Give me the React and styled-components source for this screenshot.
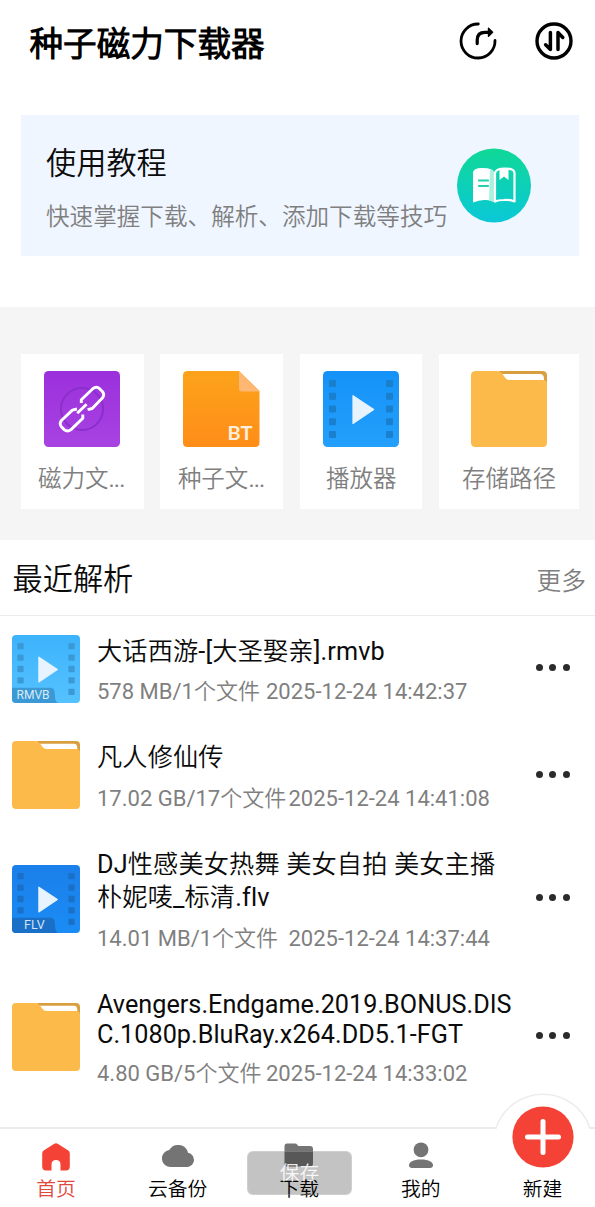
import React from 'react';
import styled, { createGlobalStyle } from 'styled-components';

const colors = {
  text: '#0b0b0b',
  muted: '#7f7f7f',
  line: '#ececec',
  red: '#f44336',
  nav: '#747474',
};

const GlobalStyle = createGlobalStyle`
  * { box-sizing: border-box; }
  body {
    margin: 0;
    background: #fff;
    color: ${colors.text};
    font-family: Roboto, 'Noto Sans CJK SC DemiLight', 'Noto Sans CJK SC', sans-serif;
    overflow: hidden;
  }
  svg { display: block; flex: none; }
`;

const Page = styled.div`
  display: flex;
  flex-direction: column;
  width: 595px;
  height: 1207px;
  overflow: hidden;
`;

const Header = styled.header`
  display: flex;
  align-items: center;
  height: 84px;
  padding: 0 22px 0 29.5px;
`;

const AppTitle = styled.h1`
  flex: 1;
  margin: 6px 0 0;
  font-size: 33.6px;
  line-height: 40px;
  font-weight: 700;
  color: #000;
`;

const HeaderActions = styled.div`
  display: flex;
  gap: 38px;
  margin-bottom: 2px;
`;

const Banner = styled.section`
  display: flex;
  justify-content: space-between;
  height: 141px;
  margin: 31px 16px 51px 20.5px;
  padding: 29px 48px 0 25.5px;
  background: #eff6ff;
`;

const BannerTitle = styled.h2`
  margin: 0;
  font-size: 30.2px;
  line-height: 40px;
  font-weight: 400;
`;

const BannerText = styled.p`
  margin: 17px 0 0;
  font-size: 23.6px;
  line-height: 32px;
  color: ${colors.muted};
  white-space: nowrap;
`;

const BannerIcon = styled.div`
  margin-top: 4px;
`;

const Shortcuts = styled.section`
  display: grid;
  grid-template-columns: 123px 123px 122px 140px;
  justify-content: space-between;
  height: 233px;
  padding: 47px 16px 31px 20.5px;
  background: #f5f5f5;
`;

const Shortcut = styled.div`
  display: flex;
  flex-direction: column;
  align-items: center;
  padding-top: 17px;
  background: #fff;
`;

const ShortcutLabel = styled.span`
  margin-top: 16px;
  font-size: 23.5px;
  line-height: 32px;
  color: ${colors.muted};
  white-space: nowrap;
`;

const Ellipsis = styled.span`
  margin-right: 1.5px;
  letter-spacing: -0.9px;
`;

const SectionHead = styled.div`
  display: flex;
  justify-content: space-between;
  align-items: center;
  height: 75.5px;
  padding: 6px 9px 0 12.5px;
  border-bottom: 1px solid ${colors.line};
`;

const SectionTitle = styled.h2`
  margin: 0;
  font-size: 30.2px;
  line-height: 40px;
  font-weight: 400;
`;

const More = styled.span`
  padding-top: 3px;
  font-size: 24.8px;
  line-height: 32px;
  color: ${colors.muted};
`;

const FileList = styled.div`
  flex: 1;
`;

const FileRow = styled.div`
  display: flex;
  align-items: center;
  padding: 0 25px 0 12px;
`;

const FileInfo = styled.div`
  width: 418px;
  margin-left: 17px;
  padding: ${(p) => (p.$dense ? '21px 0 17px' : '19px 0 16px')};
`;

const FileName = styled.div`
  font-size: 25.2px;
  line-height: ${(p) => (p.$dense ? '30px' : '33.5px')};
  letter-spacing: ${(p) => (p.$dense ? '0.03px' : '0.15px')};
  word-break: break-all;
`;

const FileMeta = styled.div`
  display: flex;
  margin-top: 10px;
  font-size: 22px;
  line-height: 28px;
  color: ${colors.muted};
  white-space: nowrap;
`;

const FileSize = styled.span`
  width: ${(p) => p.$width}px;
`;

const Dots = styled.div`
  display: flex;
  gap: 6.4px;
  margin-left: auto;
  margin-bottom: 2px;

  i {
    width: 7.2px;
    height: 7.2px;
    border-radius: 50%;
    background: #2b2b2b;
  }
`;

const TabBar = styled.nav`
  position: relative;
  display: flex;
  justify-content: space-between;
  height: 80px;
  padding: 0 12.5px 0 16px;
  border-top: 2px solid ${colors.line};
`;

const Tab = styled.div`
  position: relative;
  display: flex;
  flex-direction: column;
  align-items: center;
  justify-content: flex-end;
  width: 80px;
  padding-bottom: 4px;
`;

const TabLabel = styled.span`
  font-size: 19.8px;
  line-height: 26px;
  margin-top: 4px;
  color: ${(p) => (p.$active ? '#e0483e' : '#000')};
`;

const AddButton = styled.div`
  position: absolute;
  left: 50%;
  top: -37px;
  margin-left: -50px;
`;

const Toast = styled.div`
  position: absolute;
  left: 247px;
  top: 22px;
  width: 105px;
  height: 44px;
  border: 1px solid rgba(255, 255, 255, 0.2);
  border-radius: 6px;
  background: rgba(0, 0, 0, 0.235);
  color: rgba(255, 255, 255, 0.88);
  font-size: 19.8px;
  line-height: 43px;
  text-align: center;
`;

const ShareIcon = () => (
  <svg width="38" height="38" viewBox="0 0 38 38" fill="none" stroke="#000" strokeLinecap="round" strokeLinejoin="round">
    <path d="M19.300 2A17 17 0 1 0 36 18.400" strokeWidth="2.800" />
    <path d="M18.200 21.600V18Q18.200 10.300 26 10.300H31" strokeWidth="3.200" />
    <path d="M29.500 6.300 33.600 10.300 29.500 14.200Z" fill="#000" strokeWidth="1.400" />
  </svg>
);

const SortIcon = () => (
  <svg width="38" height="38" viewBox="0 0 38 38" fill="none" stroke="#000" strokeLinecap="round" strokeLinejoin="round">
    <circle cx="19" cy="19" r="17" strokeWidth="3.400" />
    <path d="M15.400 10.600V27.400L10.600 22.800" strokeWidth="3.500" />
    <path d="M23 27.600V10.600L27.800 15.400" strokeWidth="3.500" />
  </svg>
);

const GuideIcon = () => (
  <svg width="74" height="75" viewBox="0 0 74 75">
    <defs>
      <linearGradient id="guide" x1="0" y1="0" x2="0" y2="1">
        <stop offset="0" stopColor="#10d896" />
        <stop offset="1" stopColor="#0ac8d8" />
      </linearGradient>
    </defs>
    <circle cx="37" cy="37.5" r="37" fill="url(#guide)" />
    <path d="M16 25Q16 20 25 20Q37 20 37 25V54Q33 51.500 27 52Q22 52 16 54.500Z" fill="#fff" />
    <path d="M33 21Q37 22 37 25V54L32 52.400Z" fill="#a9f1e0" />
    <path d="M38 25Q39 20.500 48 20.500Q57.500 20.500 57.500 25V53.500Q53 51.500 47 52Q41 52 38 53.500Z" fill="none" stroke="#fff" strokeWidth="2.200" strokeLinejoin="round" />
    <path d="M42.500 20H51.500V32L47 28.600L42.500 32Z" fill="#fff" />
    <path d="M22 32.500H31M22 38H31" stroke="#20d0ae" strokeWidth="2.200" strokeLinecap="round" />
  </svg>
);

const MagnetIcon = () => (
  <svg width="76" height="76" viewBox="0 0 76 76">
    <defs>
      <linearGradient id="magnet" x1="0" y1="0" x2="0" y2="1">
        <stop offset="0" stopColor="#9b30dc" />
        <stop offset="1" stopColor="#a843e2" />
      </linearGradient>
    </defs>
    <rect width="76" height="76" rx="4.500" fill="url(#magnet)" />
    <circle cx="38" cy="38" r="21" fill="none" stroke="#8a2fca" strokeWidth="2" />
    <g fill="none" stroke="#fff" strokeWidth="2.900" strokeLinejoin="round">
      <path d="M37.300 32V28.800L48.800 17.700Q52.500 15 55.600 17.700L58.600 20.700Q60.800 23.800 58.600 26.800L48.200 37.500L43.600 38.600" />
      <path d="M33 38 28.400 39.100 17.400 49.500Q15 52.500 17.400 55.800L20.200 58.600Q23.400 61.200 27 58.600L38.800 47.200V43.500" />
      <path d="M33.200 42.200 42.600 33.200" />
    </g>
  </svg>
);

const TorrentLabel = styled.text`
  font-family: Lato, sans-serif;
  font-size: 18.5px;
  font-weight: 700;
  fill: #ffeedb;
`;

const TorrentIcon = () => (
  <svg width="77" height="76" viewBox="0 0 77 76">
    <defs>
      <linearGradient id="torrent" x1="0" y1="0" x2="0" y2="1">
        <stop offset="0" stopColor="#fca31a" />
        <stop offset="1" stopColor="#ff8d19" />
      </linearGradient>
    </defs>
    <path d="M4.500 0H56L76.500 20V71.500Q76.500 76 72 76H4.500Q0 76 0 71.500V4.500Q0 0 4.500 0Z" fill="url(#torrent)" />
    <path d="M56 0 76.500 20.500H59Q56 20.500 56 17.500Z" fill="#ffb774" />
    <TorrentLabel x="44.500" y="69" textLength="25" lengthAdjust="spacingAndGlyphs">BT</TorrentLabel>
  </svg>
);

const BadgeText = styled.text`
  font-family: Roboto, sans-serif;
  font-size: 13.5px;
  fill: rgba(255, 255, 255, 0.82);
`;

const VideoIcon = ({ id, size, from, to, hole, badge }) => (
  <svg width={size} height={size} viewBox="0 0 76 76">
    <defs>
      <linearGradient id={id} x1="0" y1="0" x2="0" y2="1">
        <stop offset="0" stopColor={from} />
        <stop offset="1" stopColor={to} />
      </linearGradient>
    </defs>
    <rect width="76" height="76" rx="4.500" fill={`url(#${id})`} />
    {[9, 21.800, 34.500, 47.200, 60].map((y, i) => (
      <g key={y} fill={hole}>
        {!(badge && i === 4) && <rect x="6" y={y} width="7" height="7" rx="1" />}
        <rect x="63" y={y} width="7" height="7" rx="1" />
      </g>
    ))}
    <path d="M30 24.700 50.700 38.500 30 52.500Z" fill="#e7f3fe" stroke="#e7f3fe" strokeWidth="1.200" strokeLinejoin="round" />
    {badge && (
      <>
        <path d="M0 59H43Q47 59 47.500 63L48.500 72Q49.500 75 51.500 76H4.500Q0 76 0 71.500Z" fill={hole} />
        <BadgeText x={badge === 'FLV' ? 13.500 : 5} y="71.800" textLength={badge === 'FLV' ? 23 : 37} lengthAdjust="spacingAndGlyphs">{badge}</BadgeText>
      </>
    )}
  </svg>
);

const FolderIcon = ({ size }) => (
  <svg width={size} height={size} viewBox="0 0 76 76">
    <path d="M28 0H71.500Q76 0 76 4.500V14H28Z" fill="#d99f3f" />
    <path d="M30 3H69Q73 3 73 8V12H34Z" fill="#fff" />
    <path d="M4.500 0H26Q29.500 0 31.500 3L34 6.500Q35.500 9 38.500 9H72Q76 9 76 13V71.500Q76 76 71.500 76H4.500Q0 76 0 71.500V4.500Q0 0 4.500 0Z" fill="#fcba4b" />
  </svg>
);

const HomeIcon = () => (
  <svg width="28" height="31" viewBox="0 0 28 31">
    <path d="M12.300 1.800Q14 .7 15.700 1.800L26.300 8.600Q27.800 9.700 27.800 11.500V24.500Q27.800 28.500 24 28.500H18.500V22.500Q18.500 18 14 18T9.500 22.500V28.500H4Q.2 28.500.2 24.500V11.500Q.2 9.700 1.700 8.600Z" fill={colors.red} />
  </svg>
);

const CloudIcon = () => (
  <svg width="34" height="31" viewBox="0 0 34 31">
    <path d="M9 25A8.500 8.500 0 0 1 8.200 8.100A10.200 10.200 0 0 1 27 10.800A7.200 7.200 0 0 1 27 25Z" fill={colors.nav} />
  </svg>
);

const DownloadIcon = () => (
  <svg width="30" height="30" viewBox="0 0 30 30">
    <path d="M3 .500H11Q12.500.5 13.300 1.700L14.300 3.100H26Q29 3.100 29 6.100V20.500Q29 23.500 26 23.500H3Q.5 23.500.5 20.500V3.500Q.5.5 3 .5Z" fill={colors.nav} />
  </svg>
);

const UserIcon = () => (
  <svg width="24" height="31" viewBox="0 0 24 31">
    <circle cx="12" cy="7.800" r="7.400" fill={colors.nav} />
    <path d="M12 17.600C20 17.600 24 20.200 24 23.200C24 25.500 22 26 20 26H4C2 26 0 25.500 0 23.200C0 20.200 4 17.600 12 17.600Z" fill={colors.nav} />
  </svg>
);

const AddIcon = () => (
  <svg width="100" height="76" viewBox="0 0 100 76">
    <path d="M3.200 37A49.500 49.500 0 0 1 96.800 37V76H3.200Z" fill="#fff" />
    <path d="M2.900 36.500A49.500 49.500 0 0 1 97.100 36.500" fill="none" stroke="#ececec" strokeWidth="1.500" />
    <circle cx="50" cy="45" r="30.600" fill={colors.red} />
    <path d="M50 29.500V60.500M34.500 45H65.500" stroke="#fff" strokeWidth="5" strokeLinecap="round" />
  </svg>
);

const files = [
  {
    name: '大话西游-[大圣娶亲].rmvb',
    size: '578 MB/1个文件',
    date: '2025-12-24 14:42:37',
    width: 169,
    icon: <VideoIcon id="rmvb" size={68} from="#3db3fd" to="#55c2ff" hole="#3b9ad6" badge="RMVB" />,
  },
  {
    name: '凡人修仙传',
    size: '17.02 GB/17个文件',
    date: '2025-12-24 14:41:08',
    width: 191.5,
    icon: <FolderIcon size={68} />,
  },
  {
    name: 'DJ性感美女热舞 美女自拍 美女主播朴妮唛_标清.flv',
    size: '14.01 MB/1个文件',
    date: '2025-12-24 14:37:44',
    width: 191.5,
    icon: <VideoIcon id="flv" size={68} from="#1b7fe9" to="#1b8cf5" hole="#1a6fc6" badge="FLV" />,
  },
  {
    name: 'Avengers.Endgame.2019.BONUS.DISC.1080p.BluRay.x264.DD5.1-FGT',
    size: '4.80 GB/5个文件',
    date: '2025-12-24 14:33:02',
    width: 169,
    dense: true,
    icon: <FolderIcon size={68} />,
  },
];

const App = () => {
  return (
    <Page>
      <GlobalStyle />
      <Header>
        <AppTitle>种子磁力下载器</AppTitle>
        <HeaderActions>
          <ShareIcon />
          <SortIcon />
        </HeaderActions>
      </Header>

      <Banner>
        <div>
          <BannerTitle>使用教程</BannerTitle>
          <BannerText>快速掌握下载、解析、添加下载等技巧</BannerText>
        </div>
        <BannerIcon><GuideIcon /></BannerIcon>
      </Banner>

      <Shortcuts>
        <Shortcut>
          <MagnetIcon />
          <ShortcutLabel>磁力文<Ellipsis>...</Ellipsis></ShortcutLabel>
        </Shortcut>
        <Shortcut>
          <TorrentIcon />
          <ShortcutLabel>种子文<Ellipsis>...</Ellipsis></ShortcutLabel>
        </Shortcut>
        <Shortcut>
          <VideoIcon id="player" size={76} from="#1592f7" to="#23a0fc" hole="#1a7fcd" />
          <ShortcutLabel>播放器</ShortcutLabel>
        </Shortcut>
        <Shortcut>
          <FolderIcon size={76} />
          <ShortcutLabel>存储路径</ShortcutLabel>
        </Shortcut>
      </Shortcuts>

      <SectionHead>
        <SectionTitle>最近解析</SectionTitle>
        <More>更多</More>
      </SectionHead>

      <FileList>
        {files.map((file) => (
          <FileRow key={file.name}>
            {file.icon}
            <FileInfo $dense={file.dense}>
              <FileName $dense={file.dense}>{file.name}</FileName>
              <FileMeta>
                <FileSize $width={file.width}>{file.size}</FileSize>
                <span>{file.date}</span>
              </FileMeta>
            </FileInfo>
            <Dots><i /><i /><i /></Dots>
          </FileRow>
        ))}
      </FileList>

      <TabBar>
        <Tab>
          <HomeIcon />
          <TabLabel $active>首页</TabLabel>
        </Tab>
        <Tab>
          <CloudIcon />
          <TabLabel>云备份</TabLabel>
        </Tab>
        <Tab>
          <DownloadIcon />
          <TabLabel>下载</TabLabel>
        </Tab>
        <Tab>
          <UserIcon />
          <TabLabel>我的</TabLabel>
        </Tab>
        <Tab>
          <AddButton><AddIcon /></AddButton>
          <TabLabel>新建</TabLabel>
        </Tab>
        <Toast>保存</Toast>
      </TabBar>
    </Page>
  );
};

export default App;
